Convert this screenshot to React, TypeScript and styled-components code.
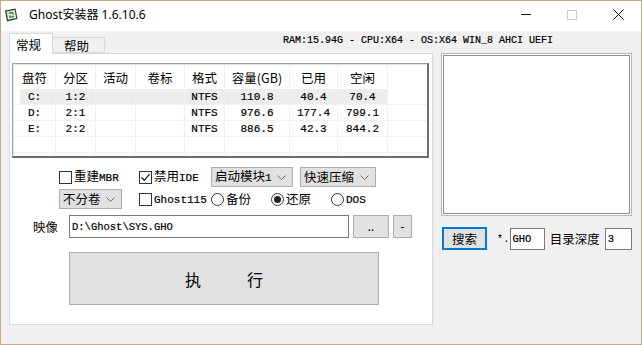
import { FC, ReactNode } from 'react'
import styled, { createGlobalStyle } from 'styled-components'

const cjk = `"Noto Sans CJK SC", sans-serif`
const mono = `"Liberation Mono", "Noto Sans CJK SC", monospace`

const GlobalStyle = createGlobalStyle`
  html, body {
    margin: 0;
    padding: 0;
    background: #fff;
  }
  body {
    font-family: "Noto Sans", ${cjk};
    color: #000;
  }
`

const columns = [
  { title: '盘符', w: 42 },
  { title: '分区', w: 40 },
  { title: '活动', w: 40 },
  { title: '卷标', w: 49 },
  { title: '格式', w: 40 },
  { title: '容量(GB)', w: 65 },
  { title: '已用', w: 48 },
  { title: '空闲', w: 50 },
]

const partitions = [
  ['C:', '1:2', '', '', 'NTFS', '110.8', '40.4', '70.4'],
  ['D:', '2:1', '', '', 'NTFS', '976.6', '177.4', '799.1'],
  ['E:', '2:2', '', '', 'NTFS', '886.5', '42.3', '844.2'],
  ['', '', '', '', '', '', '', ''],
  ['', '', '', '', '', '', '', ''],
]

const gridCols = columns.map((c) => `${c.w}px`).join(' ') + ' 1fr'

const AppIcon: FC = () => (
  <svg width="16" height="16" viewBox="0 0 16 16">
    <path d="M2 3.5 L12.5 1.5 L14.5 12 L4 14.5 Z" fill="#3b3b3b" />
    <path d="M3.6 4.6 L11.7 3 L13.2 11 L5 12.8 Z" fill="#e8ece6" />
    <path d="M6 6.5 Q8.5 4.5 10.5 6.8" stroke="#2f9d2a" strokeWidth="1.6" fill="none" />
    <path d="M10.8 9 Q8.5 11.4 6.3 9.2" stroke="#2f9d2a" strokeWidth="1.6" fill="none" />
    <path d="M9.8 5.2 L11.4 7.4 L9.2 7.6 Z" fill="#2f9d2a" />
    <path d="M7.2 10.8 L5.6 8.6 L7.8 8.4 Z" fill="#2f9d2a" />
  </svg>
)

const Chevron: FC = () => (
  <svg width="9" height="5" viewBox="0 0 9 5">
    <polyline points="0.5,0.5 4.5,4.5 8.5,0.5" fill="none" stroke="#6a6a6a" strokeWidth="1" />
  </svg>
)

const CheckMark: FC = () => (
  <svg width="11" height="11" viewBox="0 0 11 11">
    <polyline points="1.5,5.5 4.3,8.3 9.5,2.2" fill="none" stroke="#222" strokeWidth="1.3" />
  </svg>
)

const Check: FC<{ checked?: boolean; children: ReactNode }> = ({ checked, children }) => (
  <Choice>
    <Box>{checked && <CheckMark />}</Box>
    <ChoiceText>{children}</ChoiceText>
  </Choice>
)

const Radio: FC<{ checked?: boolean; children: ReactNode }> = ({ checked, children }) => (
  <Choice>
    <Box $round>{checked && <Dot />}</Box>
    <ChoiceText>{children}</ChoiceText>
  </Choice>
)

const Select: FC<{ w: number; children: ReactNode }> = ({ w, children }) => (
  <Combo $w={w}>
    <ChoiceText>{children}</ChoiceText>
    <Chevron />
  </Combo>
)

const App: FC = () => {
  return (
    <>
      <GlobalStyle />
      <Window>
        <TitleBar>
          <IconWrap>
            <AppIcon />
          </IconWrap>
          <Title>Ghost安装器 1.6.10.6</Title>
          <Caption>
            <CaptionBtn>
              <MinLine />
            </CaptionBtn>
            <CaptionBtn>
              <MaxBox />
            </CaptionBtn>
            <CaptionBtn>
              <svg width="11" height="11" viewBox="0 0 11 11">
                <path d="M0.5 0.5 L10.5 10.5 M10.5 0.5 L0.5 10.5" stroke="#111" strokeWidth="1" />
              </svg>
            </CaptionBtn>
          </Caption>
        </TitleBar>

        <Body>
          <TopRow>
            <Tabs>
              <Tab $active>常规</Tab>
              <Tab>帮助</Tab>
            </Tabs>
            <SysInfo>RAM:15.94G - CPU:X64 - OS:X64 WIN_8 AHCI UEFI</SysInfo>
          </TopRow>

          <MainRow>
            <Panel>
              <ListView>
                <GridRow $header>
                  {columns.map((c) => (
                    <HeadCell key={c.title}>{c.title}</HeadCell>
                  ))}
                  <HeadCell />
                </GridRow>
                {partitions.map((row, i) => (
                  <GridRow key={i} $selected={i === 0}>
                    {row.map((v, j) => (
                      <DataCell key={j}>{v}</DataCell>
                    ))}
                    <DataCell />
                  </GridRow>
                ))}
              </ListView>

              <OptRow $top={9}>
                <Slot $w={80}>
                  <Check>
                    重建<Latin>MBR</Latin>
                  </Check>
                </Slot>
                <Slot $w={72}>
                  <Check checked>
                    禁用<Latin>IDE</Latin>
                  </Check>
                </Slot>
                <Slot $w={89}>
                  <Select w={82}>
                    启动模块<Latin>1</Latin>
                  </Select>
                </Slot>
                <Select w={76}>快速压缩</Select>
              </OptRow>

              <OptRow $top={2}>
                <Slot $w={80}>
                  <Select w={63}>不分卷</Select>
                </Slot>
                <Slot $w={72}>
                  <Check>
                    <Latin>Ghost115</Latin>
                  </Check>
                </Slot>
                <Slot $w={60}>
                  <Radio>备份</Radio>
                </Slot>
                <Slot $w={60}>
                  <Radio checked>还原</Radio>
                </Slot>
                <Radio>
                  <Latin>DOS</Latin>
                </Radio>
              </OptRow>

              <ImageRow>
                <FieldLabel>映像</FieldLabel>
                <TextBox $w={280}>D:\Ghost\SYS.GHO</TextBox>
                <SmallBtn $w={36}>..</SmallBtn>
                <SmallBtn $w={19}>-</SmallBtn>
              </ImageRow>

              <RunButton>
                <span>执</span>
                <span>行</span>
              </RunButton>
            </Panel>

            <RightCol>
              <ListBox />
              <SearchRow>
                <SearchBtn>搜索</SearchBtn>
                <Star>*.</Star>
                <TextBox $w={36} $h={22}>
                  GHO
                </TextBox>
                <DepthLabel>目录深度</DepthLabel>
                <TextBox $w={28} $h={22}>
                  3
                </TextBox>
              </SearchRow>
            </RightCol>
          </MainRow>
        </Body>
      </Window>
    </>
  )
}

const Window = styled.div`
  width: 642px;
  height: 345px;
  box-sizing: border-box;
  border: 1px solid #c9a983;
  background: #f0f0f0;
  display: flex;
  flex-direction: column;
  overflow: hidden;
`

const TitleBar = styled.div`
  height: 30px;
  flex-shrink: 0;
  background: #fff;
  display: flex;
  align-items: center;
`

const IconWrap = styled.div`
  display: flex;
  margin-left: 2px;
  margin-top: -2px;
`

const Title = styled.div`
  margin-left: 10px;
  font-size: 12px;
  margin-top: -4px;
  color: #000;
`

const Caption = styled.div`
  margin-left: auto;
  display: flex;
  height: 30px;
`

const CaptionBtn = styled.div`
  width: 46px;
  height: 30px;
  display: flex;
  align-items: center;
  justify-content: center;
  padding-bottom: 3px;
  box-sizing: border-box;
`

const MinLine = styled.div`
  width: 10px;
  height: 1px;
  background: #111;
`

const MaxBox = styled.div`
  width: 10px;
  height: 10px;
  box-sizing: border-box;
  border: 1px solid #cccccc;
`

const Body = styled.div`
  flex: 1;
  display: flex;
  flex-direction: column;
`

const TopRow = styled.div`
  height: 22px;
  display: flex;
  align-items: flex-end;
  padding-left: 8px;
`

const Tabs = styled.div`
  display: flex;
  align-items: flex-end;
  position: relative;
  z-index: 1;
  margin-bottom: -1px;
`

const Tab = styled.div<{ $active?: boolean }>`
  box-sizing: border-box;
  font-family: ${cjk};
  font-size: 12.5px;
  line-height: 1;
  display: flex;
  align-items: center;
  width: ${(p) => (p.$active ? 44 : 52)}px;
  height: ${(p) => (p.$active ? 21 : 16)}px;
  padding-left: ${(p) => (p.$active ? 6 : 11)}px;
  padding-top: ${(p) => (p.$active ? 2 : 3)}px;
  background: ${(p) => (p.$active ? '#fff' : '#f0f0f0')};
  border: 1px solid #d9d9d9;
  border-bottom: ${(p) => (p.$active ? 'none' : '1px solid #d9d9d9')};
  border-left: ${(p) => (p.$active ? '1px solid #d9d9d9' : 'none')};
  margin-bottom: ${(p) => (p.$active ? 0 : 1)}px;
`

const SysInfo = styled.div`
  align-self: flex-start;
  margin-top: 4px;
  margin-left: 178px;
  font-family: ${mono};
  font-size: 10px;
  white-space: nowrap;
  -webkit-text-stroke: 0.2px #000;
`

const MainRow = styled.div`
  display: flex;
  align-items: flex-start;
  padding-left: 8px;
`

const Panel = styled.div`
  width: 424px;
  height: 272px;
  box-sizing: border-box;
  border: 1px solid #d9d9d9;
  background: #fff;
  padding: 9px 0 0 2px;
  display: flex;
  flex-direction: column;
`

const ListView = styled.div`
  width: 417px;
  height: 95px;
  box-sizing: border-box;
  border-top: 1px solid #a0a0a0;
  border-left: 1px solid #a0a0a0;
  border-right: 2px solid #6e6e6e;
  border-bottom: 2px solid #6e6e6e;
  box-shadow: inset 1px 1px 0 #e3e3e3;
  padding: 1px 0 0 1px;
  background: #fff;
  overflow: hidden;
`

const GridRow = styled.div<{ $header?: boolean; $selected?: boolean }>`
  display: grid;
  grid-template-columns: ${gridCols};
  height: ${(p) => (p.$header ? 24 : 16)}px;
  border-bottom: 1px solid ${(p) => (p.$header ? 'transparent' : '#f0f0f0')};
  box-sizing: border-box;
  background: ${(p) =>
    p.$selected
      ? 'linear-gradient(90deg, transparent 6px, #ececec 6px, #ececec 374px, transparent 374px)'
      : 'transparent'};
`

const HeadCell = styled.div`
  border-right: 1px solid #f0f0f0;
  font-family: ${cjk};
  font-size: 12.5px;
  display: flex;
  align-items: center;
  justify-content: center;
  padding-top: 2px;
  &:last-child {
    border-right: none;
  }
`

const DataCell = styled.div`
  border-right: 1px solid #f0f0f0;
  font-family: ${mono};
  font-size: 11px;
  display: flex;
  align-items: center;
  justify-content: center;
  -webkit-text-stroke: 0.2px #000;
  &:last-child {
    border-right: none;
  }
`

const OptRow = styled.div<{ $top: number }>`
  display: flex;
  align-items: center;
  height: 20px;
  margin-top: ${(p) => p.$top}px;
  padding-left: 47px;
`

const Slot = styled.div<{ $w: number }>`
  width: ${(p) => p.$w}px;
  flex-shrink: 0;
  display: flex;
  align-items: center;
`

const Choice = styled.div`
  display: flex;
  align-items: center;
  white-space: nowrap;
`

const ChoiceText = styled.span`
  font-family: ${cjk};
  font-size: 12.5px;
  line-height: 16px;
  white-space: nowrap;
`

const Box = styled.span<{ $round?: boolean }>`
  width: 13px;
  height: 13px;
  box-sizing: border-box;
  border: 1px solid #333;
  background: #fff;
  border-radius: ${(p) => (p.$round ? '50%' : '0')};
  display: inline-flex;
  align-items: center;
  justify-content: center;
  margin-right: 2px;
  flex-shrink: 0;
`

const Dot = styled.span`
  width: 7px;
  height: 7px;
  border-radius: 50%;
  background: #222;
`

const Latin = styled.span`
  font-family: ${mono};
  font-size: 11px;
  -webkit-text-stroke: 0.2px #000;
`

const Combo = styled.div<{ $w: number }>`
  width: ${(p) => p.$w}px;
  height: 20px;
  box-sizing: border-box;
  border: 1px solid #adadad;
  background: #e1e1e1;
  display: flex;
  align-items: center;
  justify-content: space-between;
  padding: 0 6px 0 3px;
  white-space: nowrap;
`

const ImageRow = styled.div`
  display: flex;
  align-items: center;
  height: 23px;
  margin-top: 6px;
  padding-left: 21px;
`

const FieldLabel = styled.div`
  width: 36px;
  font-family: ${cjk};
  font-size: 12.5px;
`

const TextBox = styled.div<{ $w: number; $h?: number }>`
  width: ${(p) => p.$w}px;
  height: ${(p) => p.$h ?? 23}px;
  box-sizing: border-box;
  border: 1px solid #7a7a7a;
  background: #fff;
  font-family: ${mono};
  font-size: 10.5px;
  display: flex;
  align-items: center;
  padding-left: 2px;
  -webkit-text-stroke: 0.2px #000;
  white-space: nowrap;
`

const SmallBtn = styled.div<{ $w: number }>`
  width: ${(p) => p.$w}px;
  height: 23px;
  box-sizing: border-box;
  border: 1px solid #adadad;
  background: #e1e1e1;
  margin-left: 4px;
  display: flex;
  align-items: center;
  justify-content: center;
  font-family: "Noto Sans", sans-serif;
  font-size: 12px;
`

const RunButton = styled.div`
  width: 310px;
  height: 53px;
  box-sizing: border-box;
  border: 1px solid #adadad;
  background: #e1e1e1;
  margin-top: 14px;
  margin-left: 57px;
  display: flex;
  align-items: center;
  justify-content: center;
  gap: 46px;
  font-family: ${cjk};
  font-size: 16px;
`

const RightCol = styled.div`
  width: 191px;
  margin-left: 8px;
  display: flex;
  flex-direction: column;
`

const ListBox = styled.div`
  height: 163px;
  box-sizing: border-box;
  border: 1px solid #b9b9b9;
  background: #fff;
  box-shadow: inset 0 0 0 1px #fff, inset 0 0 0 2px #8f8f8f;
`

const SearchRow = styled.div`
  display: flex;
  align-items: center;
  height: 23px;
  margin-top: 11px;
`

const SearchBtn = styled.div`
  width: 46px;
  height: 23px;
  box-sizing: border-box;
  border: 2px solid #0078d7;
  background: #e1e1e1;
  margin-left: 1px;
  display: flex;
  align-items: center;
  justify-content: center;
  font-family: ${cjk};
  font-size: 12.5px;
`

const Star = styled.div`
  margin-left: 10px;
  width: 13px;
  font-family: ${mono};
  font-size: 10.5px;
`

const DepthLabel = styled.div`
  margin: 0 5px;
  font-family: ${cjk};
  font-size: 12.5px;
  white-space: nowrap;
`

export default App
